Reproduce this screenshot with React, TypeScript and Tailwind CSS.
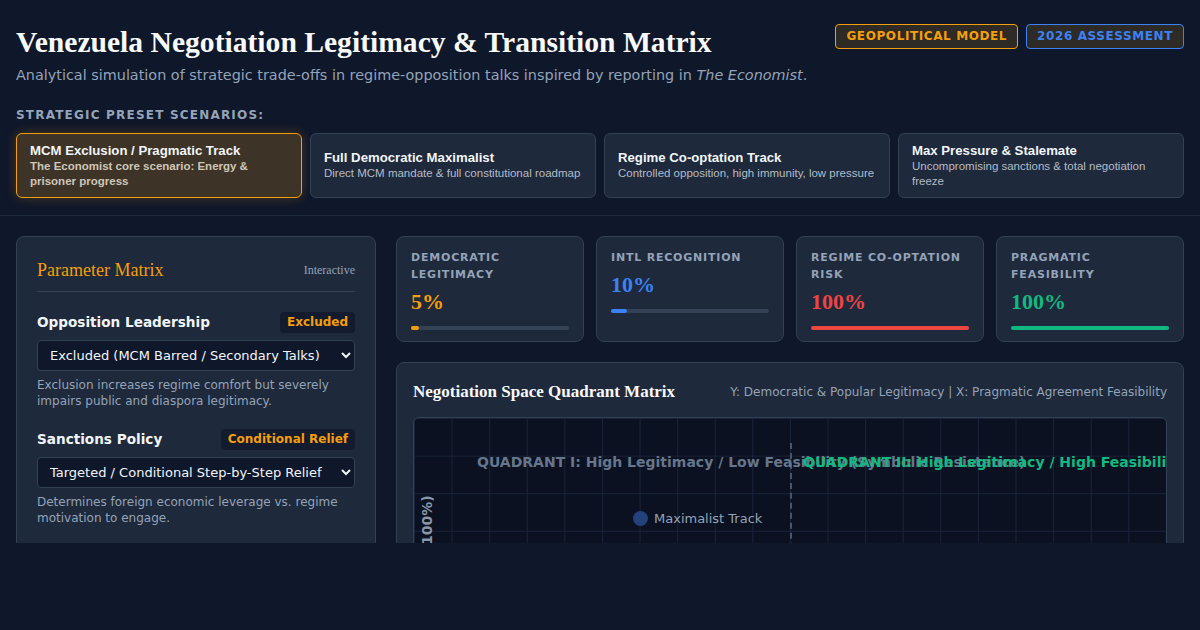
import React from "react";

type Scenario = { title: string; desc: string; active?: boolean };

const scenarios: Scenario[] = [
  {
    title: "MCM Exclusion / Pragmatic Track",
    desc: "The Economist core scenario: Energy & prisoner progress",
    active: true,
  },
  { title: "Full Democratic Maximalist", desc: "Direct MCM mandate & full constitutional roadmap" },
  { title: "Regime Co-optation Track", desc: "Controlled opposition, high immunity, low pressure" },
  { title: "Max Pressure & Stalemate", desc: "Uncompromising sanctions & total negotiation freeze" },
];

type Metric = { label: string; value: number; text: string; bar: string };

const metrics: Metric[] = [
  { label: "Democratic Legitimacy", value: 5, text: "text-[#f59e0b]", bar: "bg-[#f59e0b]" },
  { label: "Intl Recognition", value: 10, text: "text-[#3b82f6]", bar: "bg-[#3b82f6]" },
  { label: "Regime Co-optation Risk", value: 100, text: "text-[#ef4444]", bar: "bg-[#ef4444]" },
  { label: "Pragmatic Feasibility", value: 100, text: "text-[#10b981]", bar: "bg-[#10b981]" },
];

function Param({
  label,
  badge,
  option,
  help,
}: {
  label: string;
  badge: string;
  option: string;
  help: string;
}) {
  return (
    <div className="mt-5">
      <div className="flex items-center justify-between">
        <span className="text-[13.6px] font-bold text-[#f1f5f9]">{label}</span>
        <span className="rounded bg-[#131c2e] px-[7px] text-xs leading-[21px] font-bold text-[#f59e0b]">
          {badge}
        </span>
      </div>
      <select
        defaultValue={option}
        className="mt-[7px] h-[31px] w-full rounded border border-[#334155] bg-[#0f172a] pl-2 text-[13px] text-[#f1f5f9]"
      >
        <option>{option}</option>
      </select>
      <p className="mt-[6px] text-xs leading-4 text-[#94a3b8]">{help}</p>
    </div>
  );
}

export default function App() {
  return (
    <div className="min-h-[630px] bg-[#0f172a] font-['DejaVu_Sans',sans-serif]">
      <div className="h-[543px] overflow-hidden">
        {/* Header */}
        <header className="border-b border-[#1e293b] px-4 pt-6 pb-[17px]">
          <div className="flex items-start justify-between">
            <div className="whitespace-nowrap">
              <h1 className="font-['Liberation_Serif',serif] text-[29.6px] leading-9 font-bold text-[#f8fafc]">
                Venezuela Negotiation Legitimacy &amp; Transition Matrix
              </h1>
              <p className="mt-1 text-[14.4px] leading-[22px] text-[#94a3b8]">
                Analytical simulation of strategic trade-offs in regime-opposition talks inspired by reporting in{" "}
                <em>The Economist</em>.
              </p>
            </div>
            <div className="flex shrink-0 gap-2 whitespace-nowrap">
              <span className="rounded border border-[#f59e0b] bg-[#2e2a25] px-2.5 text-xs leading-[23px] font-bold tracking-[0.6px] text-[#f59e0b]">
                GEOPOLITICAL MODEL
              </span>
              <span className="rounded border border-[#3b82f6] bg-[#2e2a25] px-2.5 text-xs leading-[23px] font-bold tracking-[0.6px] text-[#3b82f6]">
                2026 ASSESSMENT
              </span>
            </div>
          </div>

          <div className="mt-5 text-[12px] leading-[18px] font-bold tracking-[1.2px] text-[#94a3b8]">
            STRATEGIC PRESET SCENARIOS:
          </div>
          <div className="mt-[9px] grid grid-cols-4 gap-2 font-['Liberation_Sans',Arial,sans-serif]">
            {scenarios.map((s) => (
              <button
                key={s.title}
                className={
                  s.active
                    ? "flex h-[65px] flex-col justify-center rounded-md border border-[#f59e0b] bg-[#3d3327] px-[13px] text-left shadow-[0_0_12px_rgba(245,158,11,0.25)]"
                    : "flex h-[65px] flex-col justify-center rounded-md border border-[#334155] bg-[#1e293b] px-[13px] text-left"
                }
              >
                <span className="text-[13.2px] leading-4 font-bold text-[#f1f5f9]">{s.title}</span>
                <span
                  className={
                    s.active
                      ? "text-[11.5px] leading-[15px] font-bold text-[#cfc6b8]"
                      : "text-[11.5px] leading-[15px] text-[#b4bcc8]"
                  }
                >
                  {s.desc}
                </span>
              </button>
            ))}
          </div>
        </header>

        {/* Main */}
        <main className="grid grid-cols-[360px_1fr] gap-5 px-4 pt-5">
          <aside className="rounded-lg border border-[#334155] bg-[#1e293b] px-5 pt-5">
            <div className="flex items-center justify-between border-b border-[#334155] pb-2">
              <span className="font-['Liberation_Serif',serif] text-lg leading-[26px] text-[#f59e0b]">
                Parameter Matrix
              </span>
              <span className="font-['Liberation_Serif',serif] text-xs text-[#94a3b8]">Interactive</span>
            </div>
            <Param
              label="Opposition Leadership"
              badge="Excluded"
              option="Excluded (MCM Barred / Secondary Talks)"
              help="Exclusion increases regime comfort but severely impairs public and diaspora legitimacy."
            />
            <Param
              label="Sanctions Policy"
              badge="Conditional Relief"
              option="Targeted / Conditional Step-by-Step Relief"
              help="Determines foreign economic leverage vs. regime motivation to engage."
            />
            <Param
              label="Amnesty Guarantees"
              badge="Partial"
              option="Partial Immunity for Mid-Level Officials"
              help="Shapes regime elite incentives to accept a negotiated exit."
            />
          </aside>

          <section className="flex flex-col gap-5">
            <div className="grid grid-cols-4 gap-3">
              {metrics.map((m) => (
                <div
                  key={m.label}
                  className="rounded-lg border border-[#334155] bg-[#1e293b] px-[14px] pt-3 pb-[11px]"
                >
                  <div className="text-[11px] leading-[17px] font-bold tracking-[0.8px] text-[#94a3b8] uppercase">
                    {m.label}
                  </div>
                  <div
                    className={`mt-[5px] font-['Liberation_Serif',serif] text-[22px] leading-7 font-bold ${m.text}`}
                  >
                    {m.value}%
                  </div>
                  <div className="mt-2.5 h-1 w-full rounded-full bg-[#334155]">
                    <div className={`h-1 rounded-full ${m.bar}`} style={{ width: `${m.value}%` }} />
                  </div>
                </div>
              ))}
            </div>

            <div className="rounded-lg border border-[#334155] bg-[#1e293b] p-4">
              <div className="flex items-center justify-between">
                <h2 className="font-['Liberation_Serif',serif] text-[17px] leading-[26px] font-bold text-[#f8fafc]">
                  Negotiation Space Quadrant Matrix
                </h2>
                <span className="text-xs text-[#94a3b8]">
                  Y: Democratic &amp; Popular Legitimacy | X: Pragmatic Agreement Feasibility
                </span>
              </div>

              <div className="relative mt-3 h-[412px] overflow-hidden rounded-md border border-[#334155] bg-[#0b1120] bg-[linear-gradient(to_right,#19233a_1px,transparent_1px),linear-gradient(to_bottom,#19233a_1px,transparent_1px)] bg-[size:37.6px_37.6px]">
                <div className="absolute top-[25px] bottom-0 left-1/2 border-l-2 border-dashed border-[#475569]" />
                <span className="absolute top-[34px] left-[63px] text-sm leading-5 font-bold whitespace-nowrap text-[#66768d]">
                  QUADRANT I: High Legitimacy / Low Feasibility (Symbolic Resistance)
                </span>
                <span className="absolute top-[34px] left-[389px] text-sm leading-5 font-bold whitespace-nowrap text-[#10b981]">
                  QUADRANT II: High Legitimacy / High Feasibility
                </span>
                <span className="absolute top-[206px] left-[13px] -translate-x-1/2 -translate-y-1/2 -rotate-90 text-sm font-bold whitespace-nowrap text-[#8a96a8]">
                  Democratic Legitimacy (0-100%)
                </span>
                <div className="absolute top-[91px] left-[219px] flex items-center gap-[6px]">
                  <span className="h-[15px] w-[15px] rounded-full bg-[#23427c]" />
                  <span className="text-[13px] text-[#94a3b8]">Maximalist Track</span>
                </div>
              </div>
            </div>
          </section>
        </main>
      </div>
    </div>
  );
}
